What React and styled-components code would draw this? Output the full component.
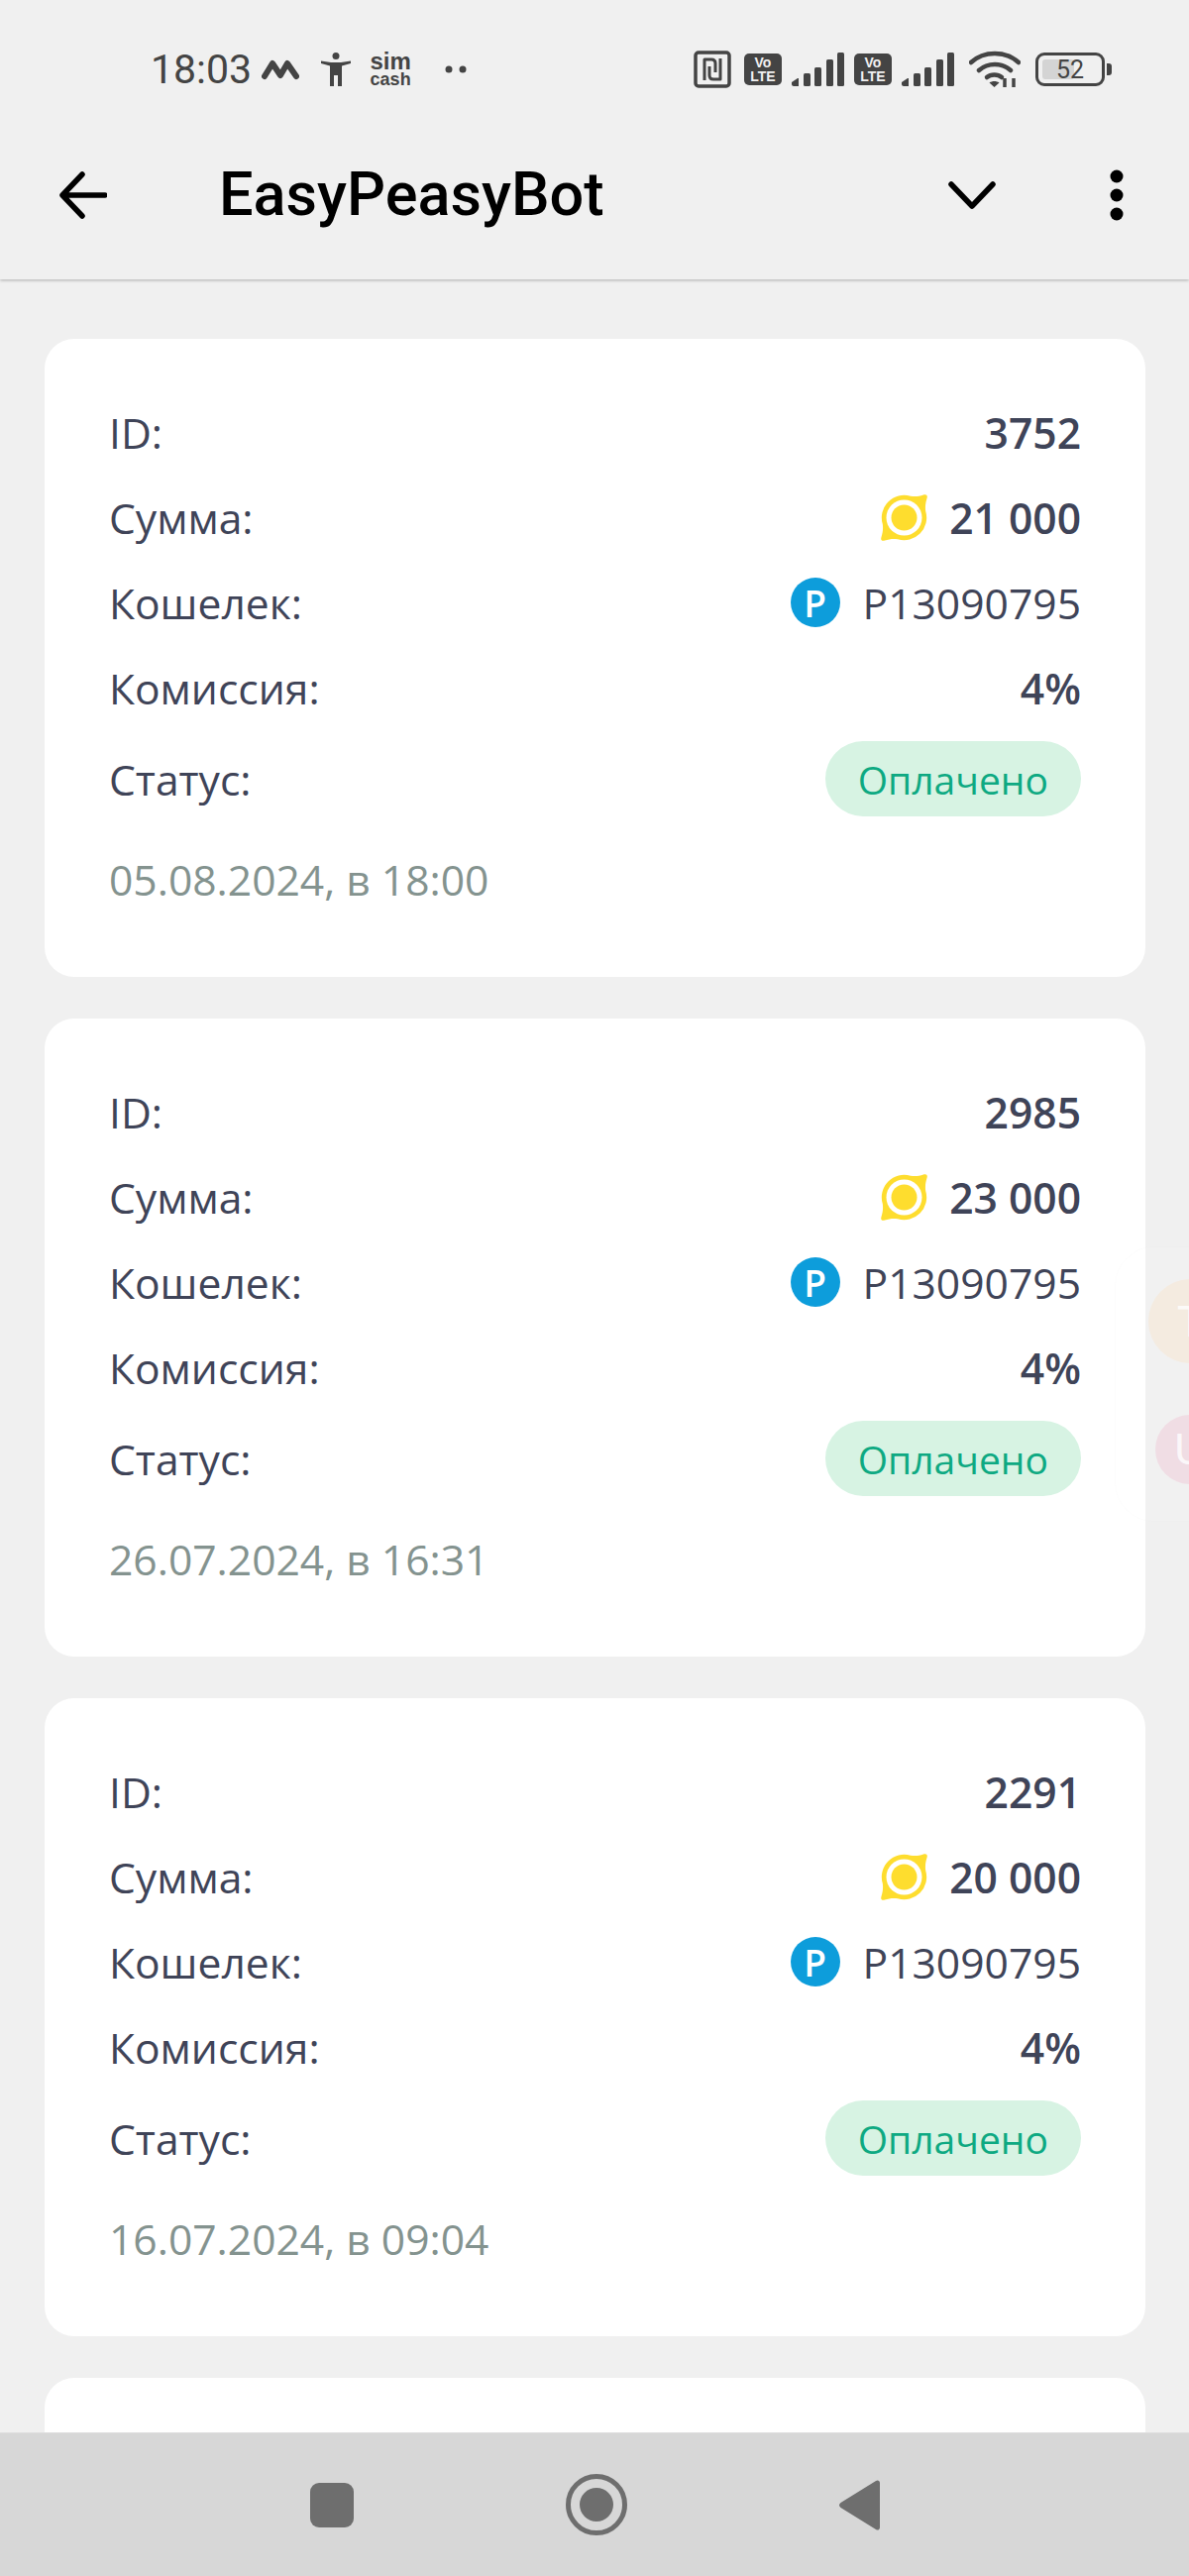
import styled, { createGlobalStyle } from 'styled-components'

const GlobalStyle = createGlobalStyle`
  html, body {
    margin: 0;
    padding: 0;
    background: #f0f0f0;
  }
  * {
    box-sizing: border-box;
  }
`

const Page = styled.div`
  position: relative;
  width: 1200px;
  height: 100vh;
  display: flex;
  flex-direction: column;
  overflow: hidden;
  background: #f0f0f0;
  font-family: "Open Sans", "Liberation Sans", sans-serif;
`

const StatusBar = styled.div`
  position: relative;
  z-index: 3;
  height: 112px;
  flex-shrink: 0;
  padding: 28px 78px 0 152px;
  display: flex;
  align-items: center;
  justify-content: space-between;
  background: #f0f0f0;
  color: #444;
`

const StatusLeft = styled.div`
  display: flex;
  align-items: center;
`

const Clock = styled.span`
  font-family: Roboto, sans-serif;
  font-size: 41px;
  line-height: 1;
  color: #444;
`

const SimCash = styled.div`
  margin-left: 20px;
  width: 40px;
  display: flex;
  flex-direction: column;
  align-items: center;
  font-family: "Liberation Sans", sans-serif;
  font-weight: 700;
  color: #444;
  span:first-child {
    font-size: 24px;
    line-height: 21px;
  }
  span:last-child {
    font-size: 18px;
    line-height: 17px;
  }
`

const StatusRight = styled.div`
  display: flex;
  align-items: center;
  gap: 15px;
`

const SimCluster = styled.div`
  display: flex;
  align-items: center;
  gap: 10px;
  margin-left: -2px;
`

const VoLte = styled.div`
  width: 38px;
  height: 32px;
  border-radius: 5px;
  background: #444;
  color: #f0f0f0;
  display: flex;
  flex-direction: column;
  align-items: center;
  justify-content: center;
  font-family: "Liberation Sans", sans-serif;
  font-weight: 700;
  font-size: 14px;
  line-height: 14px;
`

const Battery = styled.div`
  display: flex;
  align-items: center;
  gap: 2px;
`

const BatteryBody = styled.div`
  position: relative;
  width: 70px;
  height: 34px;
  border: 3px solid #444;
  border-radius: 9px;
  display: flex;
  align-items: center;
  justify-content: center;
  font-family: Roboto, sans-serif;
  font-size: 25px;
  color: #444;
  &::before {
    content: '';
    position: absolute;
    left: 4px;
    top: 4px;
    bottom: 4px;
    width: 32px;
    border-radius: 3px;
    background: #d4d4d4;
  }
  span {
    position: relative;
  }
`

const BatteryNub = styled.div`
  width: 5px;
  height: 12px;
  border-radius: 0 3px 3px 0;
  background: #444;
`

const AppBar = styled.header`
  position: relative;
  z-index: 2;
  height: 170px;
  flex-shrink: 0;
  padding: 0 66px 0 60px;
  display: flex;
  align-items: center;
  background: #f0f0f0;
  box-shadow: 0 1px 3px rgba(0, 0, 0, 0.28);
`

const Title = styled.h1`
  margin: 0 0 0 113px;
  flex: 1;
  font-family: Roboto, sans-serif;
  font-weight: 500;
  font-size: 61.2px;
  line-height: 1;
  color: #000;
`

const AppBarActions = styled.div`
  display: flex;
  align-items: center;
  gap: 115px;
`

const List = styled.main`
  flex: 1;
  min-height: 0;
  overflow: hidden;
  padding: 60px 44px 0 45px;
  display: flex;
  flex-direction: column;
  gap: 42px;
`

const Card = styled.section`
  flex-shrink: 0;
  background: #fff;
  border-radius: 30px;
  padding: 51px 65px 72px 65px;
`

// the next card in the list, only its top edge shows above the nav bar
const CardStub = styled(Card)`
  height: 200px;
  padding: 0;
`

const Row = styled.div`
  height: 86px;
  display: flex;
  align-items: center;
  justify-content: space-between;
`

const StatusRow = styled(Row)`
  height: 76px;
  margin-top: 11px;
`

const Label = styled.span`
  font-size: 42.6px;
  line-height: 54px;
  color: #3f4458;
`

const Value = styled.span`
  display: flex;
  align-items: center;
  gap: ${p => p.$gap || 0}px;
  font-size: 42.6px;
  line-height: 54px;
  font-weight: ${p => (p.$bold ? 600 : 400)};
  color: #3f4458;
`

const Badge = styled.span`
  height: 76px;
  padding: 0 33px;
  border-radius: 38px;
  display: flex;
  align-items: center;
  background: #d7f3e3;
  color: #0ea982;
  font-size: 39px;
`

const DateText = styled.div`
  margin-top: 36px;
  font-size: 42.6px;
  line-height: 54px;
  color: #84938f;
`

const PayeerIcon = styled.span`
  width: 50px;
  height: 50px;
  border-radius: 50%;
  background: #0d9ddb;
  color: #fff;
  display: flex;
  align-items: center;
  justify-content: center;
  font-weight: 600;
  font-size: 37px;
  line-height: 1;
`

const NavBar = styled.nav`
  height: 145px;
  flex-shrink: 0;
  position: relative;
  z-index: 2;
  display: flex;
  align-items: center;
  justify-content: center;
  gap: 214px;
  background: #d7d7d7;
  border-top: 1px solid #dedede;
`

// the floating currency switcher, almost transparent over the page
const GhostPanel = styled.div`
  position: absolute;
  top: 1258px;
  left: 1125px;
  width: 120px;
  height: 278px;
  border-radius: 40px;
  background: rgba(255, 255, 255, 0.12);
  border: 1px solid rgba(0, 0, 0, 0.012);
  z-index: 1;
`

const GhostCoin = styled.div`
  position: absolute;
  left: ${p => p.$left}px;
  top: ${p => p.$top}px;
  width: ${p => p.$size}px;
  height: ${p => p.$size}px;
  border-radius: 50%;
  background: ${p => p.$color};
  color: rgba(255, 255, 255, 0.8);
  display: flex;
  align-items: center;
  justify-content: center;
  font-family: "Liberation Sans", sans-serif;
  font-size: 44px;
`

const BackArrow = () => (
  <svg width="48" height="48" viewBox="0 0 48 48" fill="none" stroke="#000" strokeWidth="5.5" strokeLinecap="round" strokeLinejoin="round">
    <path d="M46 24H4M23 3L3 24l20 21" />
  </svg>
)

const Chevron = () => (
  <svg width="48" height="28" viewBox="0 0 48 28" fill="none" stroke="#000" strokeWidth="5.5" strokeLinecap="round" strokeLinejoin="round">
    <path d="M3 3l21 22L45 3" />
  </svg>
)

const Dots = () => (
  <svg width="14" height="52" viewBox="0 0 14 52" fill="#000">
    <circle cx="7" cy="7" r="6.5" />
    <circle cx="7" cy="26" r="6.5" />
    <circle cx="7" cy="45" r="6.5" />
  </svg>
)

const Lemon = () => (
  <svg width="49" height="49" viewBox="0 0 49 49">
    <path fill="#fedd2e" d="M31 2.800C36 3.500 40 2.800 44 1.500 47 .5 48.500 2 47.500 5 46.200 9 45.500 13 46.200 18A22.600 22.600 0 0 1 18 46.200C13 45.500 9 46.200 5 47.500 2 48.500 .5 47 1.500 44 2.800 40 3.500 36 2.800 31A22.600 22.600 0 0 1 31 2.800Z" />
    <circle cx="24.5" cy="24.5" r="18" fill="#fff" />
    <circle cx="24.5" cy="24.5" r="13" fill="#fedd2e" />
  </svg>
)

const MIcon = () => (
  <svg width="38" height="22" viewBox="0 0 38 22" fill="none" stroke="#444" strokeWidth="6" strokeLinecap="round" strokeLinejoin="round" style={{ marginLeft: 10 }}>
    <path d="M3 18L11 5l8 12 7-12 9 13" />
  </svg>
)

const PersonIcon = () => (
  <svg width="30" height="34" viewBox="0 0 30 34" fill="#444" style={{ marginLeft: 22 }}>
    <circle cx="15" cy="3.5" r="3.5" />
    <path d="M0 8.500L10 10h10l10-1.500v2.500l-9 2.500V34h-4V23h-4v11H9V13.500L0 11z" />
  </svg>
)

const StatusDots = () => (
  <svg width="22" height="8" viewBox="0 0 22 8" fill="#444" style={{ marginLeft: 35 }}>
    <circle cx="4" cy="4" r="3.500" />
    <circle cx="18" cy="4" r="3.500" />
  </svg>
)

const NfcIcon = () => (
  <svg width="38" height="38" viewBox="0 0 38 38" fill="none" stroke="#444" strokeWidth="3.500" strokeLinejoin="round">
    <rect x="2" y="2" width="34" height="34" rx="3" />
    <path d="M11 30V9h7c3 0 4 2 4 4v9M27 8v21h-7c-3 0-4-2-4-4v-9" strokeWidth="3" />
  </svg>
)

const SignalIcon = () => (
  <svg width="53" height="34" viewBox="0 0 53 34" fill="#444">
    <path d="M0 30l6-4h1v8H2c-1 0-2-1-2-2z" />
    <rect x="12" y="21" width="7" height="13" rx="1.500" />
    <rect x="23" y="15" width="7" height="19" rx="1.500" />
    <rect x="35" y="7" width="7" height="27" rx="1.500" />
    <rect x="46" y="0" width="7" height="34" rx="1.500" />
  </svg>
)

const WifiIcon = () => (
  <svg width="52" height="38" viewBox="0 0 52 38" fill="none" stroke="#444" strokeWidth="4.500" strokeLinecap="round">
    <path d="M2 12C15 0 37 0 50 12" />
    <path d="M10 20c9-8 23-8 32 0" />
    <path d="M18 27c4-3.500 11-3.500 15 0" />
    <path d="M25.500 37l-5-4.500c3-2 7-2 10 0z" fill="#444" stroke="none" />
    <path d="M36 28v9M45 28v9" strokeWidth="3.500" strokeLinecap="butt" />
  </svg>
)

const SquareIcon = () => (
  <svg width="44" height="45" viewBox="0 0 44 45" fill="#6e6e6e">
    <rect width="44" height="45" rx="9" />
  </svg>
)

const CircleIcon = () => (
  <svg width="62" height="62" viewBox="0 0 62 62" fill="#6e6e6e">
    <circle cx="31" cy="31" r="28.500" fill="none" stroke="#6e6e6e" strokeWidth="5" />
    <circle cx="31" cy="31" r="17" />
  </svg>
)

const TriangleIcon = () => (
  <svg width="41" height="51" viewBox="0 0 41 51" fill="#6e6e6e">
    <path d="M37 1c2-1.500 4 0 4 2v45c0 2-2 3.500-4 2L1.500 28c-2-1.500-2-3.500 0-5z" />
  </svg>
)

const payments = [
  { id: '3752', sum: '21 000', date: '05.08.2024, в 18:00' },
  { id: '2985', sum: '23 000', date: '26.07.2024, в 16:31' },
  { id: '2291', sum: '20 000', date: '16.07.2024, в 09:04' },
]

const App = () => (
  <Page>
    <GlobalStyle />
    <StatusBar>
      <StatusLeft>
        <Clock>18:03</Clock>
        <MIcon />
        <PersonIcon />
        <SimCash>
          <span>sim</span>
          <span>cash</span>
        </SimCash>
        <StatusDots />
      </StatusLeft>
      <StatusRight>
        <NfcIcon />
        <SimCluster>
          <VoLte><span>Vo</span><span>LTE</span></VoLte>
          <SignalIcon />
          <VoLte><span>Vo</span><span>LTE</span></VoLte>
          <SignalIcon />
        </SimCluster>
        <WifiIcon />
        <Battery>
          <BatteryBody><span>52</span></BatteryBody>
          <BatteryNub />
        </Battery>
      </StatusRight>
    </StatusBar>
    <AppBar>
      <BackArrow />
      <Title>EasyPeasyBot</Title>
      <AppBarActions>
        <Chevron />
        <Dots />
      </AppBarActions>
    </AppBar>
    <List>
      {payments.map(p => (
        <Card key={p.id}>
          <Row>
            <Label>ID:</Label>
            <Value $bold>{p.id}</Value>
          </Row>
          <Row>
            <Label>Сумма:</Label>
            <Value $bold $gap={21}><Lemon />{p.sum}</Value>
          </Row>
          <Row>
            <Label>Кошелек:</Label>
            <Value $gap={23}><PayeerIcon>P</PayeerIcon>P13090795</Value>
          </Row>
          <Row>
            <Label>Комиссия:</Label>
            <Value $bold>4%</Value>
          </Row>
          <StatusRow>
            <Label>Статус:</Label>
            <Badge>Оплачено</Badge>
          </StatusRow>
          <DateText>{p.date}</DateText>
        </Card>
      ))}
      <CardStub />
    </List>
    <GhostPanel>
      <GhostCoin $left={33} $top={32} $size={85} $color="#f4ebe0">T</GhostCoin>
      <GhostCoin $left={40} $top={169} $size={70} $color="#f0dde4">U</GhostCoin>
    </GhostPanel>
    <NavBar>
      <SquareIcon />
      <CircleIcon />
      <TriangleIcon />
    </NavBar>
  </Page>
)

export default App
